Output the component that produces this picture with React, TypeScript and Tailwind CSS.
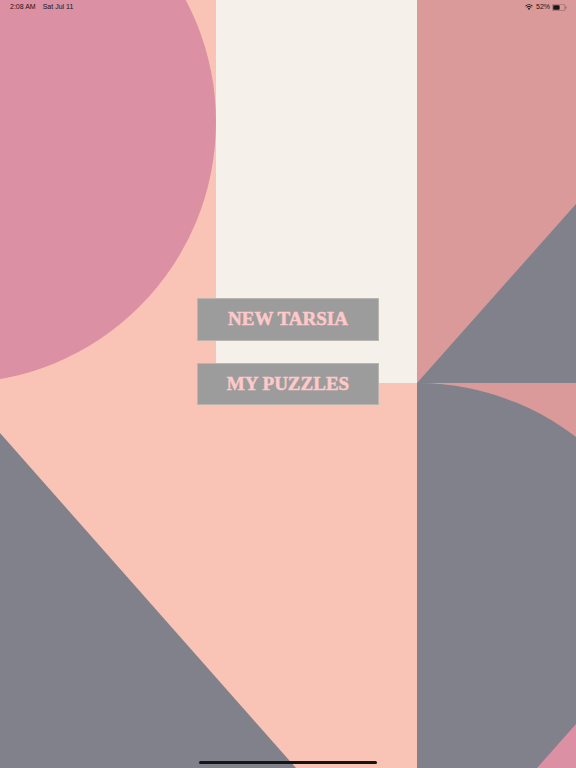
function Artwork() {
  return (
    <svg className="absolute inset-0 h-full w-full" viewBox="0 0 576 768" shapeRendering="geometricPrecision">
      <rect width="576" height="768" fill="#f9c4b6" />
      <rect x="216" width="201" height="383" fill="#f5f0ea" />
      <rect x="417" width="159" height="383" fill="#da9a9a" />
      <rect x="417" y="383" width="159" height="385" fill="#da9a9a" />
      <circle cx="-45" cy="122" r="261" fill="#dc90a4" />
      <path d="M417 383 L576 204 L576 383 Z" fill="#81818b" />
      <path d="M0 433 L296 768 L0 768 Z" fill="#81818b" />
      <path d="M417 383 A261 261 0 0 1 417 905 Z" fill="#81818b" />
      <path d="M576 724 L576 768 L537 768 Z" fill="#dc90a4" />
    </svg>
  );
}

function MenuButton({ label }: { label: string }) {
  return (
    <button className="flex h-[42.5px] w-[182px] items-center justify-center border border-[#b9b6b1] bg-[#9c9c9c] text-[19px] font-bold text-[#ffc9c9] [font-family:'Liberation_Serif',serif] [-webkit-text-stroke:0.5px_#ffc9c9]">
      {label}
    </button>
  );
}

export default function App() {
  return (
    <div className="relative h-[768px] w-[576px] overflow-hidden [font-family:'Liberation_Sans',sans-serif]">
      <Artwork />

      <div className="relative flex h-full flex-col">
        {/* status bar */}
        <div className="flex h-[14px] items-center justify-between pl-[10px] pr-[9px] text-[7px] text-[#1c1518]">
          <div className="flex gap-[7px]">
            <span>2:08 AM</span>
            <span>Sat Jul 11</span>
          </div>
          <div className="flex items-center gap-[3px]">
            <svg width="8" height="6" viewBox="0 0 18 14" fill="#1c1518">
              <path d="M9 14 L6 10.6 A4.5 4.5 0 0 1 12 10.6 Z" />
              <path d="M4.4 8.8 L3 7.2 A9 9 0 0 1 15 7.2 L13.6 8.8 A7 7 0 0 0 4.4 8.8 Z" />
              <path d="M1.6 5.6 L0 3.9 A13.2 13.2 0 0 1 18 3.9 L16.4 5.6 A11 11 0 0 0 1.6 5.6 Z" />
            </svg>
            <span>52%</span>
            <svg width="15" height="7" viewBox="0 0 15 7" className="-ml-[1px]">
              <rect x="0.3" y="0.3" width="12.6" height="6.4" rx="1.6" fill="none" stroke="#1c1518" strokeOpacity="0.45" strokeWidth="0.6" />
              <rect x="1.2" y="1.2" width="6.4" height="4.6" rx="0.8" fill="#1c1518" />
              <rect x="13.5" y="2.4" width="1" height="2.2" rx="0.5" fill="#1c1518" fillOpacity="0.45" />
            </svg>
          </div>
        </div>

        {/* menu */}
        <div className="flex flex-col items-center gap-[22px] pt-[284.3px]">
          <MenuButton label="NEW TARSIA" />
          <MenuButton label="MY PUZZLES" />
        </div>

        {/* home indicator */}
        <div className="mt-auto flex justify-center pb-[4px]">
          <div className="h-[3px] w-[178px] rounded-full bg-[#151515]" />
        </div>
      </div>
    </div>
  );
}
